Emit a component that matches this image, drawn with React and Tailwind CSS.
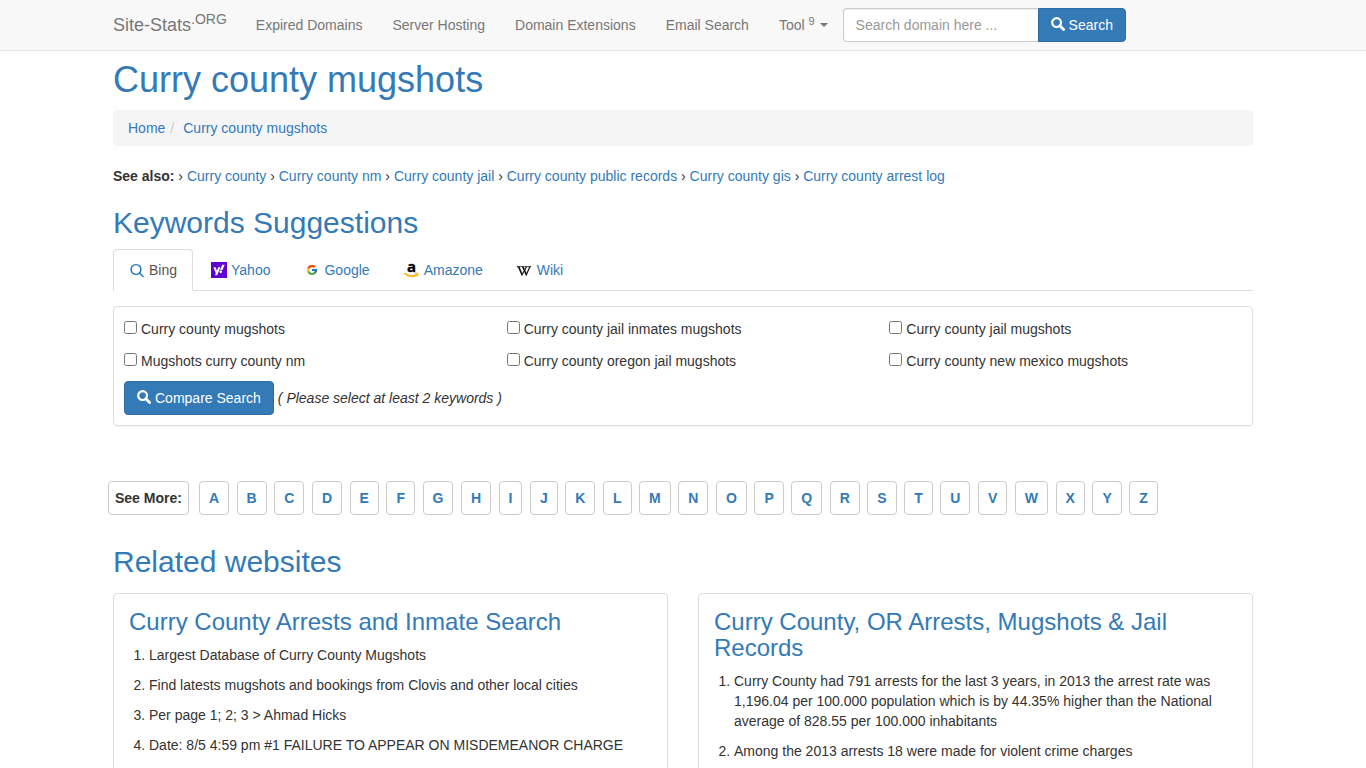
import { useState } from 'react';
import { FaWikipediaW, FaYahoo } from 'react-icons/fa';
import { FcGoogle } from 'react-icons/fc';

const NAV_LINKS = ['Expired Domains', 'Server Hosting', 'Domain Extensions', 'Email Search'];

const SEE_ALSO = [
  'Curry county',
  'Curry county nm',
  'Curry county jail',
  'Curry county public records',
  'Curry county gis',
  'Curry county arrest log',
];

const KEYWORDS = [
  'Curry county mugshots',
  'Curry county jail inmates mugshots',
  'Curry county jail mugshots',
  'Mugshots curry county nm',
  'Curry county oregon jail mugshots',
  'Curry county new mexico mugshots',
];

const LETTERS = 'ABCDEFGHIJKLMNOPQRSTUVWXYZ'.split('');

const WEBSITES = [
  {
    title: 'Curry County Arrests and Inmate Search',
    facts: [
      'Largest Database of Curry County Mugshots',
      'Find latests mugshots and bookings from Clovis and other local cities',
      'Per page 1; 2; 3 > Ahmad Hicks',
      'Date: 8/5 4:59 pm #1 FAILURE TO APPEAR ON MISDEMEANOR CHARGE',
    ],
  },
  {
    title: 'Curry County, OR Arrests, Mugshots & Jail Records',
    facts: [
      'Curry County had 791 arrests for the last 3 years, in 2013 the arrest rate was 1,196.04 per 100.000 population which is by 44.35% higher than the National average of 828.55 per 100.000 inhabitants',
      'Among the 2013 arrests 18 were made for violent crime charges',
    ],
  },
];

function SearchIcon() {
  return (
    <svg viewBox="0 0 14 14" className="w-[14px] h-[14px] -mt-[2px]" fill="none" stroke="currentColor">
      <circle cx="5.6" cy="5.6" r="4.4" strokeWidth="2.2" />
      <path d="M8.8 8.8 12.6 12.6" strokeWidth="2.8" strokeLinecap="round" />
    </svg>
  );
}

function BingIcon() {
  return (
    <svg viewBox="0 0 16 16" className="w-4 h-4" fill="none" stroke="#1a73b8" strokeWidth="1.4" strokeLinecap="round">
      <circle cx="7" cy="7.5" r="4.9" />
      <path d="M10.6 11.1 14 14.4" />
    </svg>
  );
}

function YahooIcon() {
  return (
    <span className="flex w-4 h-4 items-center justify-center bg-[#5f01d1] text-white">
      <FaYahoo className="w-3 h-3" />
    </span>
  );
}

function GoogleIcon() {
  return (
    <span className="flex w-4 h-4 items-center justify-center">
      <FcGoogle className="w-3 h-3" />
    </span>
  );
}

function AmazonIcon() {
  return (
    <svg viewBox="0 0 16 16" className="w-4 h-4 overflow-visible">
      <text x="3" y="10" fontSize="15" fontWeight="bold" fontFamily="Open Sans, sans-serif" fill="#000" stroke="#000" strokeWidth="0.3">a</text>
      <path d="M1 11.6c3.4 3 8.6 3.3 11.8 1.3" fill="none" stroke="#fbb416" strokeWidth="1.9" strokeLinecap="round" />
      <path d="M11.2 11.4c1.4-.5 2.6-.4 2.8 0 .2.5-.2 1.7-.9 2.5" fill="none" stroke="#fbb416" strokeWidth="1.1" strokeLinecap="round" />
    </svg>
  );
}

function WikiIcon() {
  return (
    <span className="flex w-4 h-4 items-center text-black">
      <FaWikipediaW className="w-[14px] h-[14px] mt-[2px]" strokeWidth="22" />
    </span>
  );
}

const TABS = [
  { name: 'Bing', Icon: BingIcon },
  { name: 'Yahoo', Icon: YahooIcon },
  { name: 'Google', Icon: GoogleIcon },
  { name: 'Amazone', Icon: AmazonIcon },
  { name: 'Wiki', Icon: WikiIcon },
];

function Navbar() {
  return (
    <nav className="bg-[#f8f8f8] border-b border-[#e7e7e7] text-[#777]">
      <div className="max-w-[1170px] mx-auto px-[15px] flex flex-wrap items-center min-h-[50px]">
        <a href="#" className="mr-[14px] text-lg leading-5">
          Site-Stats<sup className="text-[14px]">.ORG</sup>
        </a>
        {NAV_LINKS.map((label) => (
          <a key={label} href="#" className="px-[15px] py-[15px]">{label}</a>
        ))}
        <a href="#" className="px-[15px] py-[15px] flex items-center">
          <span>Tool <sup className="text-[11px]">9</sup></span>
          <span className="ml-[5px] border-x-4 border-t-4 border-x-transparent border-t-[#777]" />
        </a>
        <form className="flex" onSubmit={(e) => e.preventDefault()}>
          <input
            type="text"
            aria-label="Search domain"
            placeholder="Search domain here ..."
            className="w-[195px] h-[34px] px-3 bg-white border border-r-0 border-[#ccc] rounded-l text-[#555] placeholder:text-[#999] shadow-[inset_0_1px_1px_rgba(0,0,0,0.075)] outline-none"
          />
          <button type="submit" className="h-[34px] px-3 flex items-center gap-1 bg-[#337ab7] border border-[#2e6da4] rounded-r text-white">
            <SearchIcon /> Search
          </button>
        </form>
      </div>
    </nav>
  );
}

function KeywordTabs() {
  const [active, setActive] = useState('Bing');

  return (
    <div role="tablist" className="flex border-b border-[#ddd]">
      {TABS.map(({ name, Icon }) => (
        <button
          key={name}
          role="tab"
          aria-selected={active === name}
          onClick={() => setActive(name)}
          className={`mr-[2px] -mb-px px-[15px] py-[10px] flex items-center gap-1 border rounded-t ${
            active === name ? 'bg-white border-[#ddd] border-b-white text-[#555]' : 'border-transparent text-[#337ab7]'
          }`}
        >
          <Icon /> {name}
        </button>
      ))}
    </div>
  );
}

function KeywordForm() {
  return (
    <form onSubmit={(e) => e.preventDefault()} className="mt-[15px] p-[10px] border border-[#ddd] rounded shadow-[0_1px_1px_rgba(0,0,0,0.05)]">
      <div className="pt-[2px] pb-[10px] grid grid-cols-3 gap-x-[30px] gap-y-3">
        {KEYWORDS.map((keyword) => (
          <label key={keyword} className="flex items-start gap-1">
            <input type="checkbox" className="w-[13px] h-[13px] mt-[2px]" />
            {keyword}
          </label>
        ))}
      </div>
      <div className="flex items-center gap-1">
        <button type="submit" className="h-[34px] px-3 flex items-center gap-1 bg-[#337ab7] border border-[#2e6da4] rounded text-white">
          <SearchIcon /> Compare Search
        </button>
        <em>( Please select at least 2 keywords )</em>
      </div>
    </form>
  );
}

function LetterIndex() {
  return (
    <div className="mt-[55px] -ml-[5px] flex gap-[10px] font-bold">
      <span className="px-[6px] py-[6px] border border-[#ccc] rounded whitespace-nowrap">See More:</span>
      <ul className="flex flex-1 justify-between max-w-[959px]">
        {LETTERS.map((letter) => (
          <li key={letter}>
            <a href="#" className="block px-[9px] py-[6px] border border-[#ccc] rounded text-[#337ab7]">{letter}</a>
          </li>
        ))}
      </ul>
    </div>
  );
}

function WebsiteCard({ title, facts }) {
  return (
    <article className="p-[15px] border border-[#ddd] rounded shadow-[0_1px_1px_rgba(0,0,0,0.05)]">
      <h3 className="mb-[10px] text-2xl leading-[26px] text-[#337ab7]"><a href="#">{title}</a></h3>
      <ol className="pl-5 list-decimal">
        {facts.map((fact) => <li key={fact} className="mb-[10px]">{fact}</li>)}
      </ol>
    </article>
  );
}

export default function App() {
  return (
    <div className="min-h-screen bg-white text-[14px] leading-5 text-[#333] font-['Liberation_Sans',Arial,sans-serif]">
      <Navbar />
      <main className="max-w-[1170px] mx-auto px-[15px]">
        <h1 className="pt-[9px] mb-[10px] text-[36px] leading-10 text-[#337ab7]">Curry county mugshots</h1>

        <ol className="mb-5 px-[15px] py-2 flex bg-[#f5f5f5] rounded text-[#337ab7]">
          <li><a href="#">Home</a></li>
          <li>
            <span className="px-[5px] text-[#ccc]">/</span>
            <a href="#" className="ml-1">Curry county mugshots</a>
          </li>
        </ol>

        <p>
          <strong>See also:</strong>
          {SEE_ALSO.map((label) => (
            <span key={label}> › <a href="#" className="text-[#337ab7]">{label}</a></span>
          ))}
        </p>

        <h2 className="mt-5 mb-[10px] text-[30px] leading-[33px] text-[#337ab7]">Keywords Suggestions</h2>
        <KeywordTabs />
        <KeywordForm />
        <LetterIndex />

        <h2 className="mt-[30px] mb-[15px] text-[30px] leading-[33px] text-[#337ab7]">Related websites</h2>
        <div className="grid grid-cols-2 gap-[30px]">
          {WEBSITES.map((site) => (
            <WebsiteCard key={site.title} title={site.title} facts={site.facts} />
          ))}
        </div>
      </main>
    </div>
  );
}
